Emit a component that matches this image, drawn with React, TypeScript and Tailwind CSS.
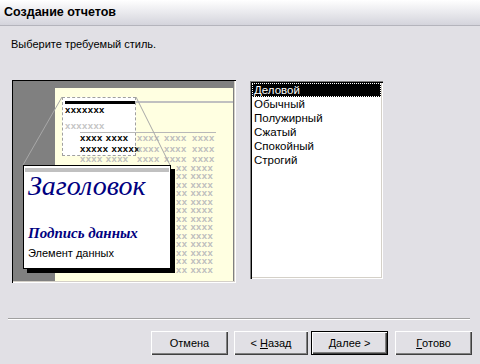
import React from "react";

const xText = "text-[9.5px] leading-[10px] font-bold tracking-[0.4px] whitespace-nowrap";
const gray = "text-[#bdbdbd]";

function XRow({ black, className }: { black?: string; className?: string }) {
  return (
    <div className={"grid grid-cols-[57px_27px_28px_24px] " + xText + " " + (className ?? "")}>
      <span className={black ? "text-black" : gray}>{black ?? "xxxx xxxx"}</span>
      <span className={gray}>xxxx</span>
      <span className={gray}>xxxx</span>
      <span className={gray}>xxxx</span>
    </div>
  );
}

const sideLines = Array.from({ length: 13 }, () => "xx xxxx").join("\n");

function Preview() {
  return (
    <div className="relative w-[224px] h-[203px] bg-[#808080] pl-[43px] pt-[8px] pr-[3px] pb-[2px] shadow-[inset_1px_1px_0_#000,inset_-1px_-1px_0_#fff,inset_-2px_-2px_0_#d4d0c8] overflow-hidden">
      {/* cream report page */}
      <div className="relative h-full bg-[#ffffe1] pt-[13px] flex flex-col">
        {/* dashed zoom rect (behind content) */}
        <div className="absolute left-[7px] top-[9px] w-[74px] h-[59px] bg-white border border-dashed border-[#a0a0a0]" />
        <div className="relative flex items-start h-[3px]">
          <div className="ml-[10px] w-[70px] h-[3px] bg-black" />
          <div className="flex-1 h-[2px] bg-[#c0c0c0]" />
        </div>
        <div className={"relative ml-[10px] mt-[1px] text-black " + xText}>xxxxxxx</div>
        <div className={"relative ml-[10px] mt-[6px] text-[#c4c4c4] " + xText}>xxxxxxx</div>
        <div className="relative ml-[25px] mt-[1px] w-[136px] h-px bg-[#b8b8b8]" />
        <XRow black="xxxx xxxx" className="relative ml-[25px]" />
        <XRow black="xxxxx xxxxx" className="relative ml-[25px] mt-[1px]" />
        <XRow className="relative ml-[25px]" />
        <div className={"ml-[121px] -mt-[0.5px] whitespace-pre text-[9.5px] leading-[8.5px] font-bold tracking-[0.4px] " + gray}>
          {sideLines}
        </div>
      </div>
      {/* zoom lines */}
      <svg className="absolute left-0 top-0" width="224" height="203">
        <line x1="50" y1="17" x2="11" y2="85" stroke="#a8a8a8" strokeWidth="1" />
        <line x1="124" y1="17" x2="158" y2="85" stroke="#a8a8a8" strokeWidth="1" />
      </svg>
      {/* magnified callout card */}
      <div className="absolute left-[11px] top-[85px] w-[148px] h-[104px] bg-white border border-black shadow-[4px_4px_0_#000] px-[4px] pt-[2px] flex flex-col">
        <div className="-mx-[3px] h-[4px] bg-[#c0c0c0]" />
        <div
          className="-mt-[1px] text-[28px] leading-[30px] italic text-[#000080] whitespace-nowrap"
          style={{ fontFamily: '"Liberation Serif", serif' }}
        >
          Заголовок
        </div>
        <div
          className="mt-[23px] text-[15px] leading-[18px] italic font-bold text-[#000080] whitespace-nowrap"
          style={{ fontFamily: '"Liberation Serif", serif' }}
        >
          Подпись данных
        </div>
        <div className="mt-[4px] text-[11px] leading-[14px] text-black whitespace-nowrap">Элемент данных</div>
      </div>
    </div>
  );
}

const items = ["Деловой", "Обычный", "Полужирный", "Сжатый", "Спокойный", "Строгий"];

function Btn({
  children,
  def,
  className,
}: {
  children: React.ReactNode;
  def?: boolean;
  className?: string;
}) {
  return (
    <div
      className={
        "h-[24px] flex items-center justify-center text-[11px] text-black bg-[#e1e0e5] shadow-[inset_1px_1px_0_#fff,inset_-1px_-1px_0_#404040,inset_-2px_-2px_0_#808080] " +
        (def ? "border border-black " : "") +
        (className ?? "")
      }
    >
      {children}
    </div>
  );
}

export default function App() {
  return (
    <div
      className="w-[480px] h-[364px] bg-[#e1e0e5] flex flex-col overflow-hidden text-black"
      style={{ fontFamily: '"Liberation Sans", Arial, sans-serif' }}
    >
      <div className="h-[26px] bg-gradient-to-b from-white to-[#d4d4dc] border-b border-[#b4b4bc] pl-[4px] flex items-center text-[12.5px] font-bold">
        Создание отчетов
      </div>
      <div className="pl-[11px] pt-[11px] text-[11px] leading-[14px]">Выберите требуемый стиль.</div>
      <div className="flex pl-[12px] pt-[29px] gap-[14px]">
        <Preview />
        <div className="mt-[1px] w-[133px] h-[198px] bg-white p-[2px] shadow-[inset_1px_1px_0_#808080,inset_2px_2px_0_#000,inset_-1px_-1px_0_#fff,inset_-2px_-2px_0_#d4d0c8]">
          {items.map((it, i) => (
            <div
              key={it}
              className={
                "h-[14px] pl-[2px] text-[11.5px] leading-[14px] whitespace-nowrap " +
                (i === 0 ? "bg-black text-white outline-1 outline-dotted outline-white -outline-offset-1" : "")
              }
            >
              {it}
            </div>
          ))}
        </div>
      </div>
      <div className="mt-[35px] mx-[10px] ml-[8px] h-[2px] border-t border-[#a0a0a0] border-b border-b-white" />
      <div className="flex mt-[11px] pl-[151px] gap-[6px]">
        <Btn className="w-[77px]">Отмена</Btn>
        <div className="flex gap-[3px]">
          <Btn className="w-[74px]">
            &lt;&nbsp;<span className="underline">Н</span>азад
          </Btn>
          <Btn def className="w-[77px]">
            <span className="underline">Д</span>алее &gt;
          </Btn>
        </div>
        <Btn className="w-[77px] ml-[1px]">
          <span className="underline">Г</span>отово
        </Btn>
      </div>
    </div>
  );
}
